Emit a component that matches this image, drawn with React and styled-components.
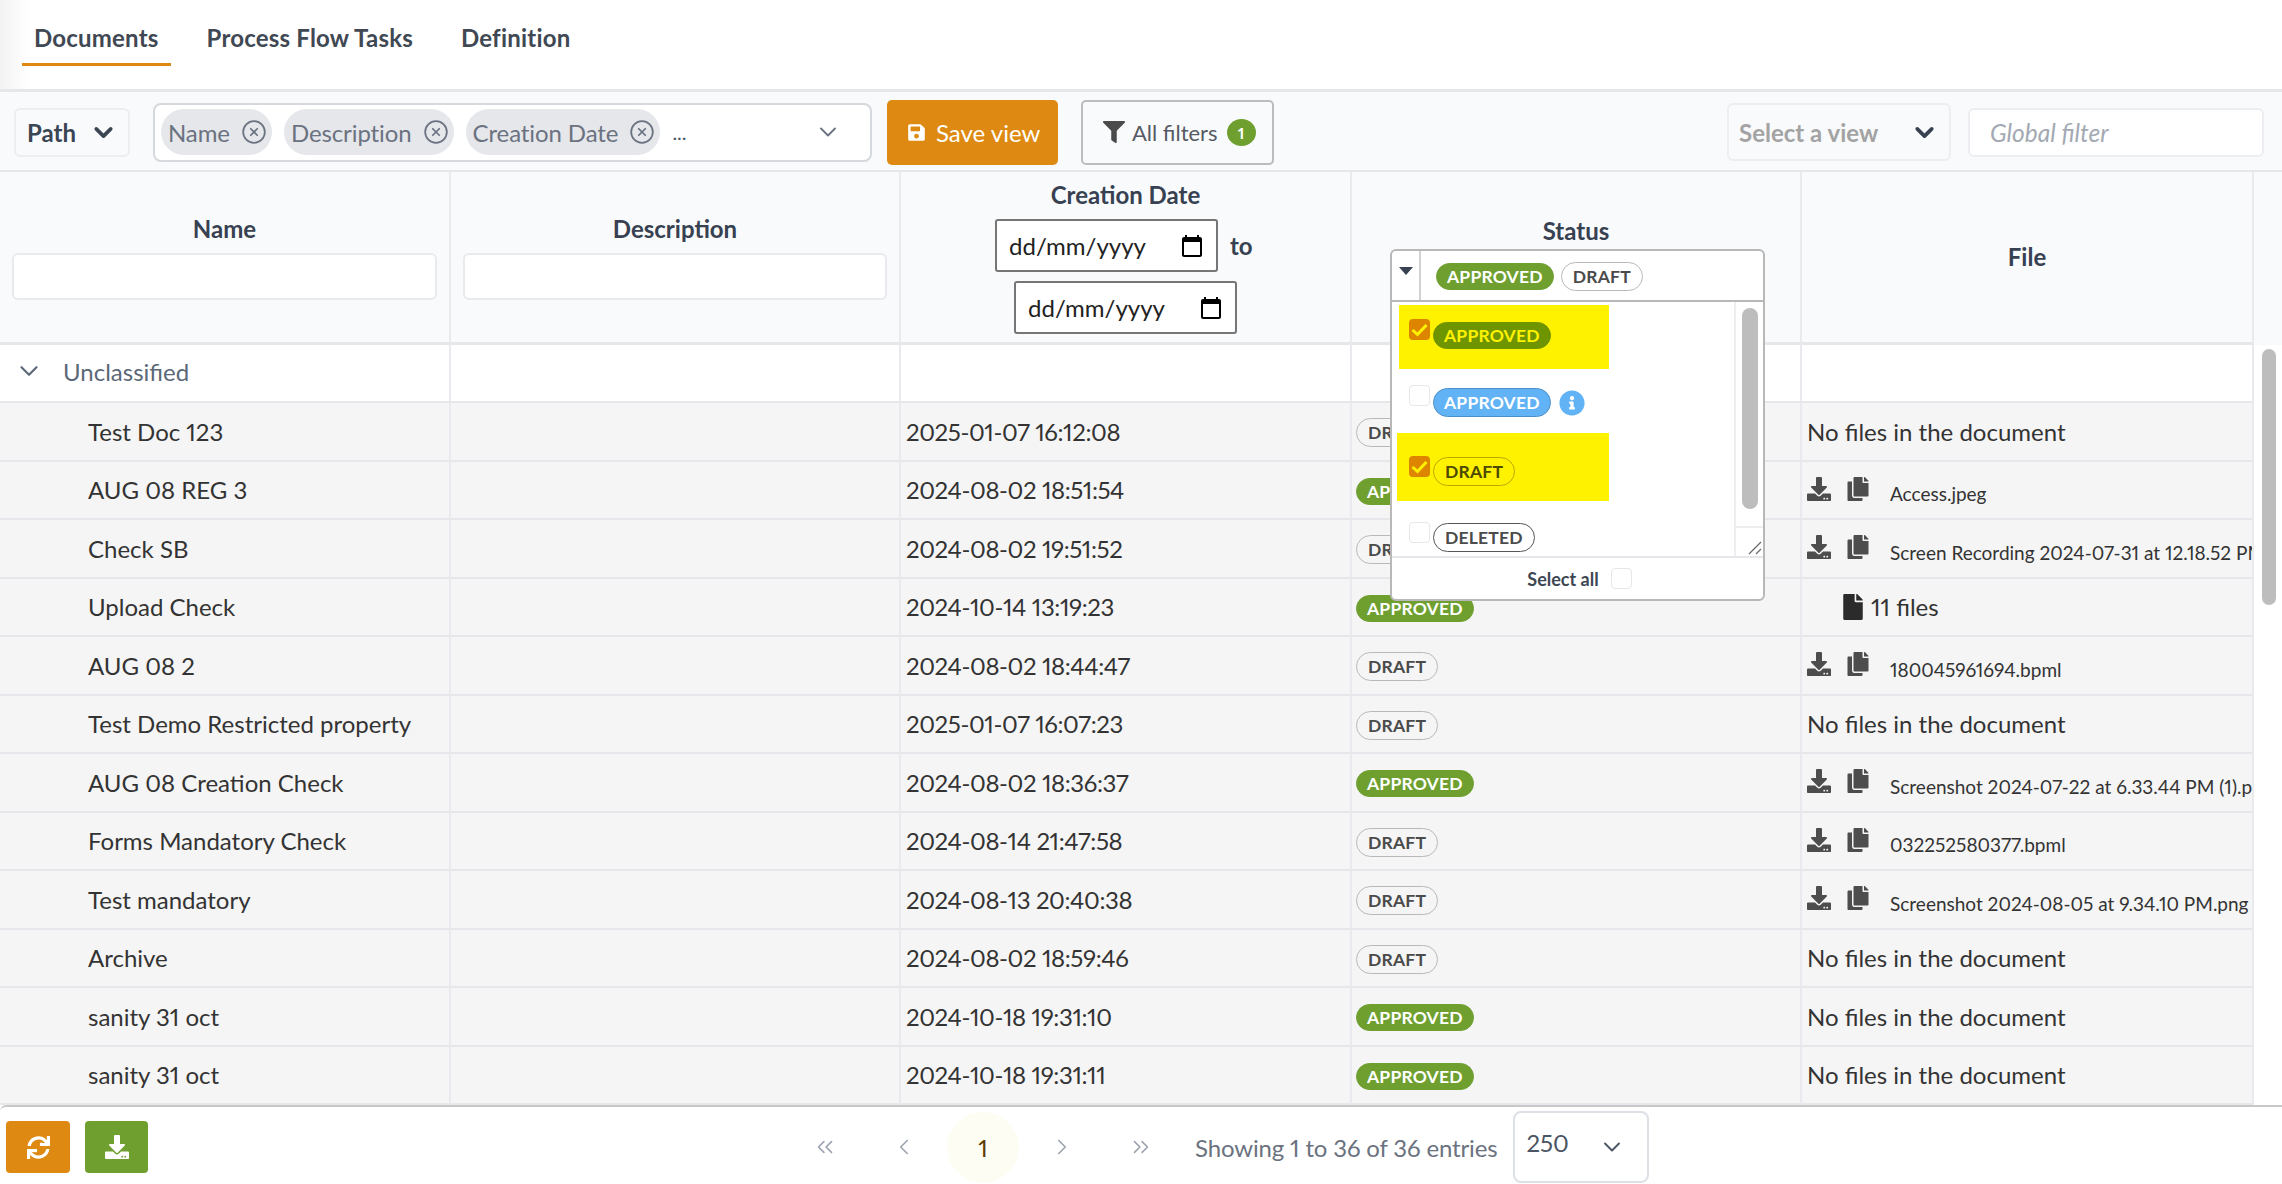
import React from 'react';
import styled, { createGlobalStyle, css } from 'styled-components';
import { ChevronDown, ChevronLeft, ChevronRight, ChevronsLeft, ChevronsRight, CircleX } from 'lucide-react';
import { FaCopy, FaDownload, FaFile, FaFilter, FaInfoCircle, FaSave, FaSync } from 'react-icons/fa';

const Global = createGlobalStyle`
  * { box-sizing: border-box; }
  html, body { margin: 0; padding: 0; background: #fff; }
  body { font-family: Lato, "Open Sans", sans-serif; color: #333; font-variant-numeric: proportional-nums; }
`;

const Page = styled.div`
  width: 2282px;
  height: 1184px;
  display: flex;
  flex-direction: column;
  overflow: hidden;
`;

const Tabs = styled.nav`
  height: 92px;
  flex: none;
  display: flex;
  padding: 0 22px;
  gap: 24px;
  border-bottom: 3px solid #e5e7eb;
  background: linear-gradient(90deg, #f3f3f3, #fff 30px);
`;

const Tab = styled.div`
  height: 66px;
  padding: 23px 12px 0;
  font-size: 24px;
  line-height: 30px;
  font-weight: 700;
  letter-spacing: 0.2px;
  color: #3f4853;
  border-bottom: 3px solid ${p => (p.$active ? '#de8a12' : 'transparent')};
`;

const Toolbar = styled.div`
  height: 80px;
  flex: none;
  display: flex;
  align-items: center;
  padding: 2px 18px 0 14px;
  background: #f9fafb;
  border-bottom: 2px solid #e5e7eb;
`;

const FieldSelect = styled.div`
  height: ${p => p.$h || 49}px;
  width: ${p => p.$w}px;
  flex: none;
  display: flex;
  align-items: center;
  justify-content: space-between;
  padding: 0 ${p => p.$right || 10}px 0 ${p => p.$left || 11}px;
  border: 2px solid #eceef1;
  border-radius: 6px;
  font-size: 24px;
  font-weight: 700;
  color: ${p => p.$muted ? '#a3a3a3' : '#3b4654'};
  background: #f9fafb;
`;

const ColumnPicker = styled.div`
  width: 719px;
  height: 59px;
  margin-left: 23px;
  flex: none;
  display: flex;
  align-items: center;
  gap: 12px;
  padding: 0 28px 0 6px;
  background: #fff;
  border: 2px solid #d5d8dd;
  border-radius: 8px;
  font-size: 24px;
  color: #6b7280;
`;

const ColumnChip = styled.span`
  height: 46px;
  display: inline-flex;
  align-items: center;
  gap: 11px;
  padding: 0 5px 0 7px;
  background: #e5e7eb;
  border-radius: 23px;
  letter-spacing: -0.1px;
  white-space: nowrap;
`;

const Ellipsis = styled.span`
  flex: 1;
  color: #4b5563;
  font-size: 20px;
`;

const Button = styled.div`
  height: 65px;
  flex: none;
  display: flex;
  align-items: center;
  border-radius: 5px;
  font-size: 24px;
`;

const SaveButton = styled(Button)`
  width: 171px;
  margin-left: 15px;
  gap: 10px;
  padding-left: 20px;
  background: #de8a12;
  color: #fff;
`;

const FilterButton = styled(Button)`
  width: 193px;
  margin-left: 23px;
  gap: 7px;
  padding-left: 20px;
  border: 2px solid #bcbcbc;
  font-size: 22px;
  color: #555b63;
`;

const CountBadge = styled.span`
  width: 29px;
  height: 27px;
  margin-left: 2px;
  display: flex;
  align-items: center;
  justify-content: center;
  border-radius: 50%;
  background: #6e9f2f;
  color: #fff;
  font-size: 16px;
  font-weight: 700;
`;

const GlobalFilter = styled.div`
  width: 296px;
  height: 49px;
  margin-left: 17px;
  flex: none;
  display: flex;
  align-items: center;
  padding-left: 20px;
  background: #fff;
  border: 2px solid #eceef1;
  border-radius: 6px;
  font-size: 24.5px;
  font-style: italic;
  color: #a3a9b2;
`;

const Spacer = styled.div`
  flex: 1;
`;

const Main = styled.div`
  flex: 1;
  min-height: 0;
  overflow: hidden;
`;

const columns = '451px 450px 451px 450px 452px 28px';

const HeadRow = styled.div`
  height: 173px;
  display: grid;
  grid-template-columns: ${columns};
  background: #f9fafb;
`;

const HeadCell = styled.div`
  display: flex;
  flex-direction: column;
  align-items: ${p => p.$align || 'center'};
  justify-content: center;
  gap: ${p => p.$gap ?? 9}px;
  padding: ${p => p.$top ?? 0}px ${p => p.$side ?? 12}px 0;
  border-right: 2px solid #e8eaed;
  border-bottom: 3px solid #e5e7eb;
  position: relative;
`;

const HeadLabel = styled.div`
  width: 100%;
  text-align: center;
  font-size: 24px;
  line-height: 30px;
  font-weight: 700;
  color: #374151;
`;

const FilterInput = styled.div`
  width: 100%;
  height: 47px;
  background: #fff;
  border: 2px solid #e8eaed;
  border-radius: 6px;
`;

const DateLine = styled.div`
  display: flex;
  align-items: center;
  gap: 12px;
  margin: ${p => p.$left ? '0 0 0 113px' : '0 0 0 94px'};
  font-size: 24px;
  font-weight: 700;
  color: #374151;
`;

const DateInput = styled.div`
  width: 223px;
  height: 53px;
  display: flex;
  align-items: center;
  justify-content: space-between;
  padding: 0 12px;
  background: #fff;
  border: 2px solid #767676;
  border-radius: 3px;
  font-size: 24px;
  font-weight: 400;
  color: #222;
`;

const statusStyles = {
  approved: css`background: #6e9f2f; color: #fff; border-color: #6e9f2f;`,
  draft: css`background: transparent; color: #4b4b4b; border-color: #b9b9b9; height: 29px; padding: 0 11px;`,
  deleted: css`background: transparent; color: #4b4b4b; border-color: #555; height: 29px; padding: 0 11px;`,
  info: css`background: #62b3f5; color: #fff; border-color: #4c8fc9; height: 29px;`,
  approvedOn: css`background: #6e9400; color: #fff200; border-color: #6e9400;`,
  draftOn: css`background: transparent; color: #4d4a00; border-color: #b9a800; height: 29px; padding: 0 11px;`,
};

const Chip = styled.span`
  height: 27px;
  flex: none;
  display: inline-flex;
  align-items: center;
  padding: 0 10px;
  border: 1px solid;
  border-radius: 15px;
  font-size: 17.5px;
  font-weight: 700;
  letter-spacing: 0.2px;
  white-space: nowrap;
  ${p => statusStyles[p.$kind]}
`;

const RowChip = styled(Chip)`
  margin: 3px 0 0 -1px;
`;

const StatusBox = styled.div`
  position: relative;
  width: 375px;
  height: 52px;
  flex: none;
  margin-left: 38px;
`;

const Dropdown = styled.div`
  position: absolute;
  top: 0;
  left: 0;
  width: 375px;
  height: 352px;
  z-index: 5;
  display: flex;
  flex-direction: column;
  background: #fff;
  border: 2px solid #b8b8b8;
  border-radius: 6px;
`;

const DropdownHead = styled.div`
  height: 51px;
  flex: none;
  display: flex;
  border-bottom: 2px solid #b8b8b8;
`;

const ToggleArrow = styled.div`
  width: 29px;
  flex: none;
  display: flex;
  justify-content: center;
  padding-top: 16px;
  border-right: 2px solid #d2d2d2;
`;

const SelectedChips = styled.div`
  flex: 1;
  display: flex;
  align-items: center;
  gap: 7px;
  padding: 2px 0 0 15px;
`;

const DropdownBody = styled.div`
  height: 256px;
  flex: none;
  display: flex;
  overflow: hidden;
  border-bottom: 2px solid #e5e7eb;
`;

const OptionList = styled.div`
  flex: 1;
  padding-top: 3px;
`;

const Option = styled.div`
  width: ${p => 212 - (p.$inset || 0)}px;
  height: ${p => p.$h}px;
  margin-left: ${p => 5 + (p.$inset || 0)}px;
  display: flex;
  align-items: flex-start;
  padding: ${p => p.$top}px 0 0 ${p => 12 - (p.$inset || 0)}px;
  background: ${p => (p.$marked ? '#fff200' : 'transparent')};
`;

const OptionChipSlot = styled.div`
  display: flex;
  align-items: center;
  gap: 8px;
  margin: ${p => p.$top ?? 3}px 0 0 3px;
`;

const Check = styled.span`
  width: 21px;
  height: 21px;
  flex: none;
  display: flex;
  align-items: center;
  justify-content: center;
  border-radius: 4px;
  background: ${p => (p.$on ? '#de8500' : '#fff')};
  border: ${p => (p.$on ? 'none' : '1.5px solid #e5e7eb')};
`;

const ScrollRail = styled.div`
  width: 29px;
  flex: none;
  display: flex;
  flex-direction: column;
  align-items: center;
  border-left: 2px solid #eeeeee;
`;

const RailThumb = styled.div`
  width: 16px;
  height: 201px;
  margin-top: 6px;
  background: #bdbdbd;
  border-radius: 8px;
`;

const Resizer = styled.div`
  width: 100%;
  height: 30px;
  margin-top: auto;
  display: flex;
  align-items: flex-end;
  justify-content: flex-end;
  border-top: 2px solid #eeeeee;
`;

const DropdownFoot = styled.div`
  flex: 1;
  display: flex;
  align-items: center;
  justify-content: center;
  gap: 12px;
  padding-left: 4px;
  font-size: 18px;
  font-weight: 700;
  color: #3d4753;
`;

const GroupRow = styled.div`
  height: 58px;
  display: grid;
  grid-template-columns: ${columns};
  background: #fff;
`;

const GroupCell = styled.div`
  display: flex;
  align-items: center;
  gap: 19px;
  padding: 0 0 4px 14px;
  border-right: 2px solid #e8eaed;
  border-bottom: 2px solid #e5e7eb;
  font-size: 24px;
  color: #5b6878;
`;

const Row = styled.div`
  height: 58.5px;
  display: grid;
  grid-template-columns: ${columns};
`;

const Cell = styled.div`
  min-width: 0;
  display: flex;
  align-items: center;
  padding-left: ${p => p.$pad ?? 5}px;
  background: #f5f5f5;
  border-right: 2px solid #e8eaed;
  border-bottom: 2px solid #e5e7eb;
  font-size: 24px;
  letter-spacing: ${p => (p.$tight ? '-0.4px' : 'normal')};
  color: #333;
  white-space: nowrap;
  overflow: hidden;
`;

const FileIcons = styled.span`
  display: flex;
  gap: 15px;
  flex: none;
  margin-top: -2px;
  color: #4d4d4d;
`;

const FileName = styled.span`
  margin: 8px 0 0 20px;
  font-size: 19px;
  color: #333;
`;

const FileCount = styled.span`
  display: flex;
  align-items: center;
  gap: 5px;
  margin-left: 33px;
  color: #333;
`;

const Gutter = styled.div`
  position: relative;
  background: ${p => p.$head ? '#f9fafb' : '#fff'};
`;

const GutterThumb = styled.div`
  position: absolute;
  top: 4px;
  left: 8px;
  width: 14px;
  height: 256px;
  z-index: 2;
  background: #bdbdbd;
  border-radius: 7px;
`;

const Footer = styled.footer`
  height: 79px;
  flex: none;
  display: flex;
  align-items: center;
  padding: 3px 0 0 6px;
  background: #fff;
  border-top: 2px solid #c8c8c8;
  border-top-left-radius: 6px;
`;

const IconButton = styled.div`
  width: ${p => p.$w}px;
  height: 52px;
  margin-right: ${p => p.$gap || 0}px;
  display: flex;
  align-items: center;
  justify-content: center;
  background: ${p => p.$bg};
  color: #fff;
  border-radius: 4px;
`;

const Pager = styled.div`
  display: flex;
  align-items: center;
  gap: 7px;
  margin-left: 641px;
`;

const PageButton = styled.div`
  width: 72px;
  height: 71px;
  display: flex;
  align-items: center;
  justify-content: center;
  border-radius: 50%;
  font-size: 24px;
  color: ${p => (p.$current ? '#5b3a00' : '#9ca3af')};
  background: ${p => (p.$current ? '#fefdf4' : 'transparent')};
`;

const PageInfo = styled.div`
  margin-left: 18px;
  font-size: 24px;
  letter-spacing: -0.15px;
  color: #6b7280;
`;

const PageSize = styled.div`
  width: 136px;
  height: 72px;
  margin-left: 16px;
  display: flex;
  align-items: center;
  justify-content: space-between;
  padding: 0 21px 0 11px;
  border: 2px solid #dde0e5;
  border-radius: 8px;
  font-size: 24px;
  color: #4b5563;
`;

const PageSizeValue = styled.span`
  margin-top: -10px;
`;

const docs = [
  ['Test Doc 123', '2025-01-07 16:12:08', 'draft', null],
  ['AUG 08 REG 3', '2024-08-02 18:51:54', 'approved', 'Access.jpeg'],
  ['Check SB', '2024-08-02 19:51:52', 'draft', 'Screen Recording 2024-07-31 at 12.18.52 PM.mov'],
  ['Upload Check', '2024-10-14 13:19:23', 'approved', 11],
  ['AUG 08 2', '2024-08-02 18:44:47', 'draft', '180045961694.bpml'],
  ['Test Demo Restricted property', '2025-01-07 16:07:23', 'draft', null],
  ['AUG 08 Creation Check', '2024-08-02 18:36:37', 'approved', 'Screenshot 2024-07-22 at 6.33.44 PM (1).png'],
  ['Forms Mandatory Check', '2024-08-14 21:47:58', 'draft', '032252580377.bpml'],
  ['Test mandatory', '2024-08-13 20:40:38', 'draft', 'Screenshot 2024-08-05 at 9.34.10 PM.png'],
  ['Archive', '2024-08-02 18:59:46', 'draft', null],
  ['sanity 31 oct', '2024-10-18 19:31:10', 'approved', null],
  ['sanity 31 oct', '2024-10-18 19:31:11', 'approved', null],
];

const CalendarIcon = () => (
  <svg width="24" height="24" viewBox="0 0 24 24" fill="#000">
    <path d="M20 3h-1V1h-2v2H7V1H5v2H4c-1.1 0-2 .9-2 2v16c0 1.1.9 2 2 2h16c1.1 0 2-.9 2-2V5c0-1.1-.9-2-2-2zm0 18H4V8h16v13z" />
  </svg>
);

const CheckBox = ({ on }) => (
  <Check $on={on}>
    {on && (
      <svg width="17" height="14" viewBox="0 0 17 14" fill="none" stroke="#fff200" strokeWidth="3">
        <path d="M1.5 7l5 4.5 9-9.5" />
      </svg>
    )}
  </Check>
);

const FileCell = ({ file }) => {
  if (file === null) return <Cell>No files in the document</Cell>;
  if (typeof file === 'number') {
    return (
      <Cell>
        <FileCount>
          <FaFile size={26} color="#2b2b2b" />
          {file} files
        </FileCount>
      </Cell>
    );
  }
  return (
    <Cell>
      <FileIcons>
        <FaDownload size={24} />
        <FaCopy size={24} />
      </FileIcons>
      <FileName>{file}</FileName>
    </Cell>
  );
};

export default function App() {
  return (
    <Page>
      <Global />
      <Tabs>
        <Tab $active>Documents</Tab>
        <Tab>Process Flow Tasks</Tab>
        <Tab>Definition</Tab>
      </Tabs>

      <Toolbar>
        <FieldSelect $w={116}>
          Path
          <ChevronDown size={29} strokeWidth={3} />
        </FieldSelect>
        <ColumnPicker>
          <ColumnChip>Name <CircleX size={26} strokeWidth={1.6} /></ColumnChip>
          <ColumnChip>Description <CircleX size={26} strokeWidth={1.6} /></ColumnChip>
          <ColumnChip>Creation Date <CircleX size={26} strokeWidth={1.6} /></ColumnChip>
          <Ellipsis>...</Ellipsis>
          <ChevronDown size={28} strokeWidth={1.6} />
        </ColumnPicker>
        <SaveButton><FaSave size={19} /> Save view</SaveButton>
        <FilterButton>
          <FaFilter size={22} color="#4b4b4b" />
          All filters
          <CountBadge>1</CountBadge>
        </FilterButton>
        <Spacer />
        <FieldSelect $w={224} $h={58} $left={10} $muted>
          Select a view
          <ChevronDown size={29} strokeWidth={3} color="#374151" />
        </FieldSelect>
        <GlobalFilter>Global filter</GlobalFilter>
      </Toolbar>

      <Main>
        <HeadRow>
          <HeadCell>
            <HeadLabel>Name</HeadLabel>
            <FilterInput />
          </HeadCell>
          <HeadCell>
            <HeadLabel>Description</HeadLabel>
            <FilterInput />
          </HeadCell>
          <HeadCell $align="flex-start" $side={0}>
            <HeadLabel>Creation Date</HeadLabel>
            <DateLine>
              <DateInput>dd/mm/yyyy <CalendarIcon /></DateInput>
              to
            </DateLine>
            <DateLine $left>
              <DateInput>dd/mm/yyyy <CalendarIcon /></DateInput>
            </DateLine>
          </HeadCell>
          <HeadCell $align="flex-start" $side={0} $gap={3} $top={3}>
            <HeadLabel>Status</HeadLabel>
            <StatusBox>
              <Dropdown>
                <DropdownHead>
                  <ToggleArrow>
                    <svg width="14" height="8" viewBox="0 0 14 8" fill="#374151"><path d="M0 0h14L7 8z" /></svg>
                  </ToggleArrow>
                  <SelectedChips>
                    <Chip $kind="approved">APPROVED</Chip>
                    <Chip $kind="draft">DRAFT</Chip>
                  </SelectedChips>
                </DropdownHead>
                <DropdownBody>
                  <OptionList>
                    <Option $h={64} $top={14} $inset={2} $marked>
                      <CheckBox on />
                      <OptionChipSlot><Chip $kind="approvedOn">APPROVED</Chip></OptionChipSlot>
                    </Option>
                    <Option $h={64} $top={16}>
                      <CheckBox />
                      <OptionChipSlot>
                        <Chip $kind="info">APPROVED</Chip>
                        <FaInfoCircle size={26} color="#62b3f5" />
                      </OptionChipSlot>
                    </Option>
                    <Option $h={68} $top={23} $marked>
                      <CheckBox on />
                      <OptionChipSlot $top={1}><Chip $kind="draftOn">DRAFT</Chip></OptionChipSlot>
                    </Option>
                    <Option $h={55} $top={21}>
                      <CheckBox />
                      <OptionChipSlot $top={1}><Chip $kind="deleted">DELETED</Chip></OptionChipSlot>
                    </Option>
                  </OptionList>
                  <ScrollRail>
                    <RailThumb />
                    <Resizer>
                      <svg width="16" height="16" viewBox="0 0 16 16" stroke="#666" strokeWidth="1.2">
                        <path d="M2 14L14 2M9 14l5-5" />
                      </svg>
                    </Resizer>
                  </ScrollRail>
                </DropdownBody>
                <DropdownFoot>
                  Select all
                  <CheckBox />
                </DropdownFoot>
              </Dropdown>
            </StatusBox>
          </HeadCell>
          <HeadCell>
            <HeadLabel>File</HeadLabel>
          </HeadCell>
          <Gutter $head />
        </HeadRow>

        <GroupRow>
          <GroupCell>
            <ChevronDown size={30} strokeWidth={1.7} />
            Unclassified
          </GroupCell>
          <GroupCell />
          <GroupCell />
          <GroupCell />
          <GroupCell />
          <Gutter><GutterThumb /></Gutter>
        </GroupRow>

        {docs.map(([name, date, status, file], i) => (
          <Row key={i}>
            <Cell $pad={88}>{name}</Cell>
            <Cell />
            <Cell $tight>{date}</Cell>
            <Cell>
              <RowChip $kind={status}>{status.toUpperCase()}</RowChip>
            </Cell>
            <FileCell file={file} />
            <Gutter />
          </Row>
        ))}
      </Main>

      <Footer>
        <IconButton $w={64} $gap={15} $bg="#de8a12"><FaSync size={23} /></IconButton>
        <IconButton $w={63} $bg="#6e9f2f"><FaDownload size={24} /></IconButton>
        <Pager>
          <PageButton><ChevronsLeft size={26} strokeWidth={1.5} /></PageButton>
          <PageButton><ChevronLeft size={26} strokeWidth={1.5} /></PageButton>
          <PageButton $current>1</PageButton>
          <PageButton><ChevronRight size={26} strokeWidth={1.5} /></PageButton>
          <PageButton><ChevronsRight size={26} strokeWidth={1.5} /></PageButton>
        </Pager>
        <PageInfo>Showing 1 to 36 of 36 entries</PageInfo>
        <PageSize>
          <PageSizeValue>250</PageSizeValue>
          <ChevronDown size={28} strokeWidth={1.6} />
        </PageSize>
      </Footer>
    </Page>
  );
}
